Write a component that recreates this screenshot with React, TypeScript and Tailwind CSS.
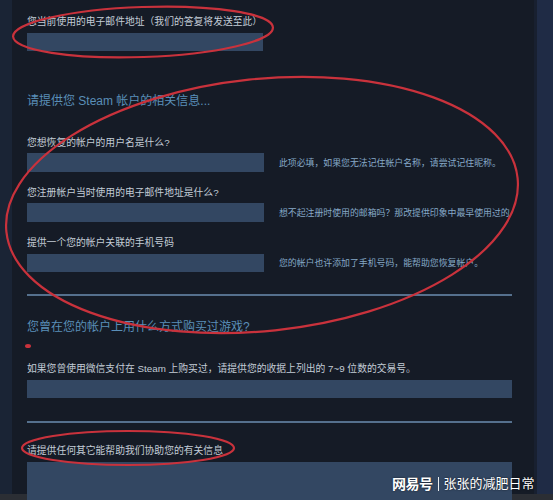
import React from "react";

const font = "font-['Liberation_Sans','Noto_Sans_CJK_SC',sans-serif]";

function Label({ children, className = "" }: { children: React.ReactNode; className?: string }) {
  return (
    <div className={`text-[9.8px] leading-[14px] text-[#c3ccd6] whitespace-nowrap ${className}`}>{children}</div>
  );
}

function Field({ h = 18, w = "w-[237px]" }: { h?: number; w?: string }) {
  return <div className={`${w} bg-[#334762] shrink-0`} style={{ height: h }} />;
}

function Row({ help, h, mt }: { help: string; h: number; mt: string }) {
  return (
    <div className={`flex items-center ${mt}`}>
      <Field h={h} />
      <div className="ml-[15px] text-[8.9px] leading-[12px] text-[#86a9c8] whitespace-nowrap">{help}</div>
    </div>
  );
}

export default function App() {
  return (
    <div className={`relative w-[553px] h-[500px] overflow-hidden bg-[#1b2536] ${font}`}>
      <div className="flex h-[494px]">
        <div className="w-[12px] shrink-0 bg-[#1a2435]" />
        <div className="w-[525px] shrink-0 bg-[#151b26] pl-[15px] pt-[15px] border-r-[3px] border-[#182030]">
          <Label>您当前使用的电子邮件地址（我们的答复将发送至此）</Label>
          <div className="mt-[4px]">
            <Field h={18} w="w-[236px]" />
          </div>

          <div className="mt-[42px] text-[12px] leading-[16px] text-[#5a8fb8] whitespace-nowrap">
            请提供您 Steam 帐户的相关信息...
          </div>

          <Label className="mt-[27px]">您想恢复的帐户的用户名是什么?</Label>
          <Row mt="mt-[3px]" h={19} help="此项必填，如果您无法记住帐户名称，请尝试记住昵称。" />

          <Label className="mt-[14px]">您注册帐户当时使用的电子邮件地址是什么?</Label>
          <Row mt="mt-[3px]" h={19} help="想不起注册时使用的邮箱吗？那改提供印象中最早使用过的" />

          <Label className="mt-[14px]">提供一个您的帐户关联的手机号码</Label>
          <Row mt="mt-[4px]" h={18} help="您的帐户也许添加了手机号码，能帮助您恢复帐户。" />

          <div className="mt-[22px] h-[2px] w-[485px] bg-[#55708d]" />

          <div className="mt-[23px] text-[12px] leading-[16px] text-[#5a8fb8] whitespace-nowrap">
            您曾在您的帐户上用什么方式购买过游戏?
          </div>

          <Label className="mt-[27px]">
            如果您曾使用微信支付在 Steam 上购买过，请提供您的收据上列出的 7~9 位数的交易号。
          </Label>
          <div className="mt-[4px]">
            <Field h={18} w="w-[485px]" />
          </div>

          <div className="mt-[23px] h-[2px] w-[485px] bg-[#55708d]" />

          <Label className="mt-[21px]">请提供任何其它能帮助我们协助您的有关信息</Label>
          <div className="mt-[4px]">
            <Field h={40} w="w-[485px]" />
          </div>
        </div>
        <div className="flex-1 bg-[#1f2b45]" />
      </div>
      <div className="h-[6px] bg-[#2b2e34]" />

      <svg className="absolute left-0 top-0 pointer-events-none" width="553" height="500" viewBox="0 0 553 500">
        <ellipse cx="143" cy="32" rx="130" ry="25" transform="rotate(-2 143 32)" fill="none" stroke="#c9323c" strokeWidth="2.2" />
        <ellipse cx="262" cy="205" rx="257" ry="126" transform="rotate(-6 262 205)" fill="none" stroke="#c9323c" strokeWidth="2.2" />
        <ellipse cx="128" cy="448" rx="106" ry="17" fill="none" stroke="#c9323c" strokeWidth="2.2" />
        <ellipse cx="28" cy="346" rx="3" ry="2" fill="#c9323c" />
      </svg>

      <div className="absolute left-[392px] top-[475px] flex items-center text-white [text-shadow:0_0_2px_rgba(0,0,0,0.7)] whitespace-nowrap">
        <span className="text-[14px] leading-[18px] font-bold tracking-[-0.5px]">网易号</span>
        <span className="mx-[5px] w-[1px] h-[14px] bg-white/90" />
        <span className="text-[13px] leading-[18px]">张张的减肥日常</span>
      </div>
    </div>
  );
}
